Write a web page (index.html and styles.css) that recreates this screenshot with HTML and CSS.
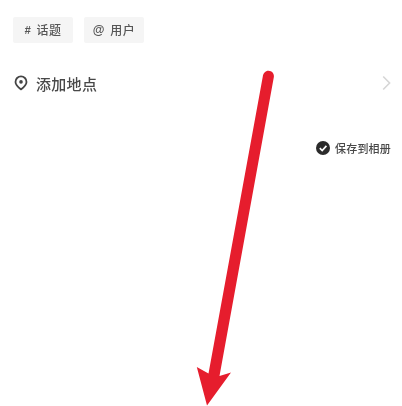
FILE: index.html
```html
<!DOCTYPE html>
<html lang="zh">
<head>
<meta charset="utf-8">
<title>发布</title>
<link rel="stylesheet" href="styles.css">
</head>
<body>
<main class="page">
  <div class="chips">
    <span class="chip"><b class="sym">#</b>话题</span>
    <span class="chip"><b class="sym at">@</b>用户</span>
  </div>
  <div class="location">
    <svg class="pin" viewBox="0 0 14 16" width="14" height="16" aria-hidden="true">
      <path d="M7 14.4C4.8 12.6 1.5 10 1.5 6.9a5.5 5.5 0 0 1 11 0c0 3.1-3.3 5.7-5.5 7.5z" fill="none" stroke="#454545" stroke-width="1.8"/>
      <circle cx="7" cy="6.9" r="1.8" fill="#454545"/>
    </svg>
    <span class="loc-text">添加地点</span>
    <svg class="chev" viewBox="0 0 9 16" width="9" height="16" aria-hidden="true">
      <path d="M1.2 1.5 7.6 8l-6.4 6.5" fill="none" stroke="#d6d6d6" stroke-width="1.6"/>
    </svg>
  </div>
  <div class="save">
    <svg class="check" viewBox="0 0 14 14" width="14" height="14" aria-hidden="true">
      <circle cx="7" cy="7" r="7" fill="#2b2b2b"/>
      <path d="M3.8 7.2 6.2 9.5 10.4 4.9" fill="none" stroke="#fff" stroke-width="1.7"/>
    </svg>
    <span class="save-text">保存到相册</span>
  </div>
</main>
<svg class="arrow" viewBox="0 0 402 406" width="402" height="406" aria-hidden="true">
  <path d="M262.8 76.5C263.2 73.4 265.3 70.8 268.5 70.8C271.9 70.8 274.2 73.6 273.9 76.8L219.5 376L231 372.5L207 405.5L196.8 367L208.5 373.5Z" fill="#e61d2d"/>
</svg>
</body>
</html>
```
FILE: styles.css
```css
html, body {
  margin: 0;
  padding: 0;
  background: #ffffff;
}
body {
  position: relative;
  width: 402px;
  height: 406px;
  overflow: hidden;
  font-family: "Noto Sans CJK SC", "Noto Sans", sans-serif;
}
.page {
  display: flex;
  flex-direction: column;
  padding: 17px 11px 0 13px;
  filter: blur(0.5px);
}
.chips {
  display: flex;
  gap: 11px;
}
.chip {
  display: flex;
  align-items: center;
  justify-content: center;
  gap: 6px;
  width: 60px;
  height: 26px;
  background: #f5f5f5;
  border-radius: 2px;
  color: #565656;
  font-size: 12px;
  font-weight: 500;
  line-height: 26px;
  letter-spacing: 0.5px;
}
.sym {
  font-family: "Liberation Sans", sans-serif;
  font-weight: 700;
  font-style: italic;
  font-size: 11px;
  letter-spacing: 0;
}
.sym.at {
  font-style: normal;
  font-size: 12px;
}
.location {
  display: flex;
  align-items: center;
  height: 24px;
  margin-top: 28px;
  padding-left: 1px;
}
.loc-text {
  margin-left: 8px;
  color: #484848;
  font-size: 15px;
  font-weight: 500;
  letter-spacing: 0.3px;
}
.chev {
  margin-left: auto;
}
.save {
  display: flex;
  align-items: center;
  justify-content: flex-end;
  gap: 5px;
  height: 16px;
  margin-top: 45px;
}
.check {
  flex: none;
}
.save-text {
  color: #484848;
  font-size: 11px;
  font-weight: 500;
  letter-spacing: 0.2px;
  white-space: nowrap;
}
.arrow {
  position: absolute;
  left: 0;
  top: 0;
}
```
